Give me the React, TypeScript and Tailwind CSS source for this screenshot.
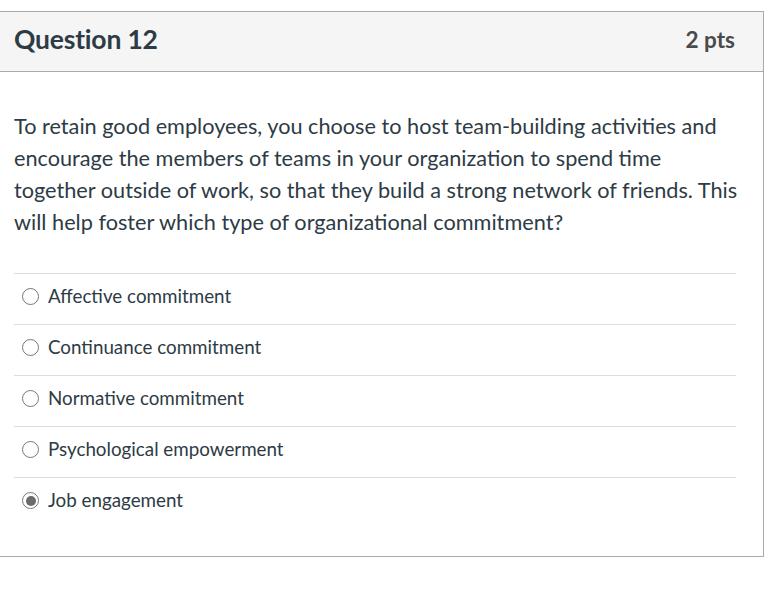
const OPTIONS = [
  "Affective commitment",
  "Continuance commitment",
  "Normative commitment",
  "Psychological empowerment",
  "Job engagement",
];

function Radio({ checked }: { checked: boolean }) {
  return (
    <span className="flex h-[17px] w-[17px] shrink-0 items-center justify-center rounded-full border-[1.5px] border-[#767676] bg-white">
      {checked && <span className="h-[10px] w-[10px] rounded-full bg-[#6b6b6b]" />}
    </span>
  );
}

export default function App() {
  const selected = "Job engagement";

  return (
    <div className="min-h-[592px] bg-white pt-[11px] font-['Lato','Noto_Sans',sans-serif] text-[#2d3b45]">
      <div className="w-[764px] border-y border-r border-[#aaaaaa] bg-white">
        {/* header */}
        <div className="flex h-[60px] items-center justify-between border-b border-[#aaaaaa] bg-[#f5f5f5] pb-[3px] pl-[14px] pr-[28px]">
          <h2 className="text-[26.5px] font-bold tracking-[-0.2px]">Question 12</h2>
          <span className="text-[22.5px] font-bold text-[#4a4a4a]">2 pts</span>
        </div>

        <div className="pl-[14px] pr-[27px] pt-[38px] pb-[28px]">
          <p className="mr-[-10px] text-[21.7px] leading-[32px]">
            To retain good employees, you choose to host team-building activities and encourage the members of teams in
            your organization to spend time together outside of work, so that they build a strong network of friends.
            This will help foster which type of organizational commitment?
          </p>

          <div className="mt-[35px]">
            {OPTIONS.map((o) => (
              <label key={o} className="flex h-[51px] items-center gap-[9px] border-t border-[#dddddd] pb-[5px] pl-[8px]">
                <Radio checked={o === selected} />
                <span className="text-[18.8px] leading-none">{o}</span>
              </label>
            ))}
          </div>
        </div>
      </div>
    </div>
  );
}
